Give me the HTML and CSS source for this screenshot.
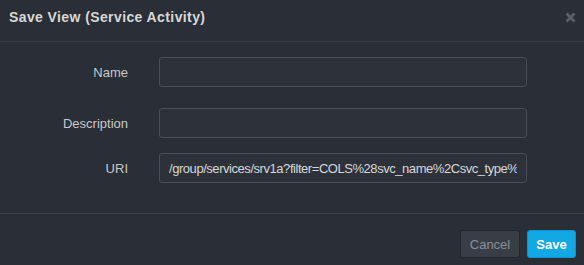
FILE: index.html
```html
<!DOCTYPE html>
<html lang="en">
<head>
  <meta charset="UTF-8" />
  <title>Save View</title>
  <link rel="stylesheet" href="styles.css">
</head>
<body>
  <div class="modal">
    <div class="modal-header">
      <h3>Save View (Service Activity)</h3>
      <span class="close">
        <svg width="11" height="11" viewBox="0 0 11 11">
          <path d="M1.5 1.5 L9.5 9.5 M9.5 1.5 L1.5 9.5" stroke="#5a5f67" stroke-width="2.8" stroke-linecap="butt" />
        </svg>
      </span>
    </div>
    <form class="modal-body">
      <div class="row row-name">
        <label>Name</label>
        <input type="text" value="">
      </div>
      <div class="row row-desc">
        <label>Description</label>
        <input type="text" value="">
      </div>
      <div class="row row-uri">
        <label>URI</label>
        <input type="text" value="/group/services/srv1a?filter=COLS%28svc_name%2Csvc_type%29">
      </div>
    </form>
    <div class="modal-footer">
      <button class="btn btn-cancel">Cancel</button>
      <button class="btn btn-save">Save</button>
    </div>
  </div>
</body>
</html>
```

FILE: styles.css
```css
* {
  margin: 0;
  padding: 0;
  box-sizing: border-box;
}

body {
  font-family: 'Liberation Sans', Arial, sans-serif;
  background: #2a2e36;
  color: #d0d0d0;
  width: 584px;
  height: 265px;
  overflow: hidden;
}

.modal {
  background: #2a2e36;
}

.modal-header {
  height: 42px;
  padding: 0 9px;
  border-bottom: 1px solid #3b3f47;
  display: flex;
  align-items: center;
  justify-content: space-between;
}

.modal-header h3 {
  font-size: 14px;
  font-weight: bold;
  letter-spacing: 0.4px;
  color: #d8d8d8;
  margin-top: -8px;
}

.close {
  display: flex;
  margin-top: -6px;
  margin-right: -1px;
}

.modal-body {
  padding: 15px 57px 30px 0;
  display: flex;
  flex-direction: column;
}

.row {
  display: grid;
  grid-template-columns: 128px 1fr;
  column-gap: 31px;
  align-items: center;
}

.row-name {
  margin-bottom: 21px;
}

.row-desc {
  margin-bottom: 15px;
}

.row label {
  text-align: right;
  font-size: 13px;
  color: #c8c8c8;
}

.row input {
  height: 30px;
  width: 100%;
  background: #2d323a;
  border: 1px solid #4a4f57;
  border-radius: 3px;
  padding: 0 9px;
  font-family: 'Liberation Sans', Arial, sans-serif;
  font-size: 13px;
  letter-spacing: -0.45px;
  color: #d8d8d8;
  outline: none;
}

.modal-footer {
  border-top: 1px solid #3b3f47;
  padding: 16px 8px 8px;
  display: flex;
  justify-content: flex-end;
  gap: 7px;
}

.btn {
  height: 28px;
  border-radius: 3px;
  font-family: 'Liberation Sans', Arial, sans-serif;
  font-size: 13px;
  cursor: pointer;
}

.btn-cancel {
  width: 60px;
  background: #393e46;
  border: 1px solid #23262c;
  color: #8a8f96;
}

.btn-save {
  width: 49px;
  background: #12a8e4;
  border: 1px solid #0c94cc;
  color: #ffffff;
  font-weight: bold;
}
```
